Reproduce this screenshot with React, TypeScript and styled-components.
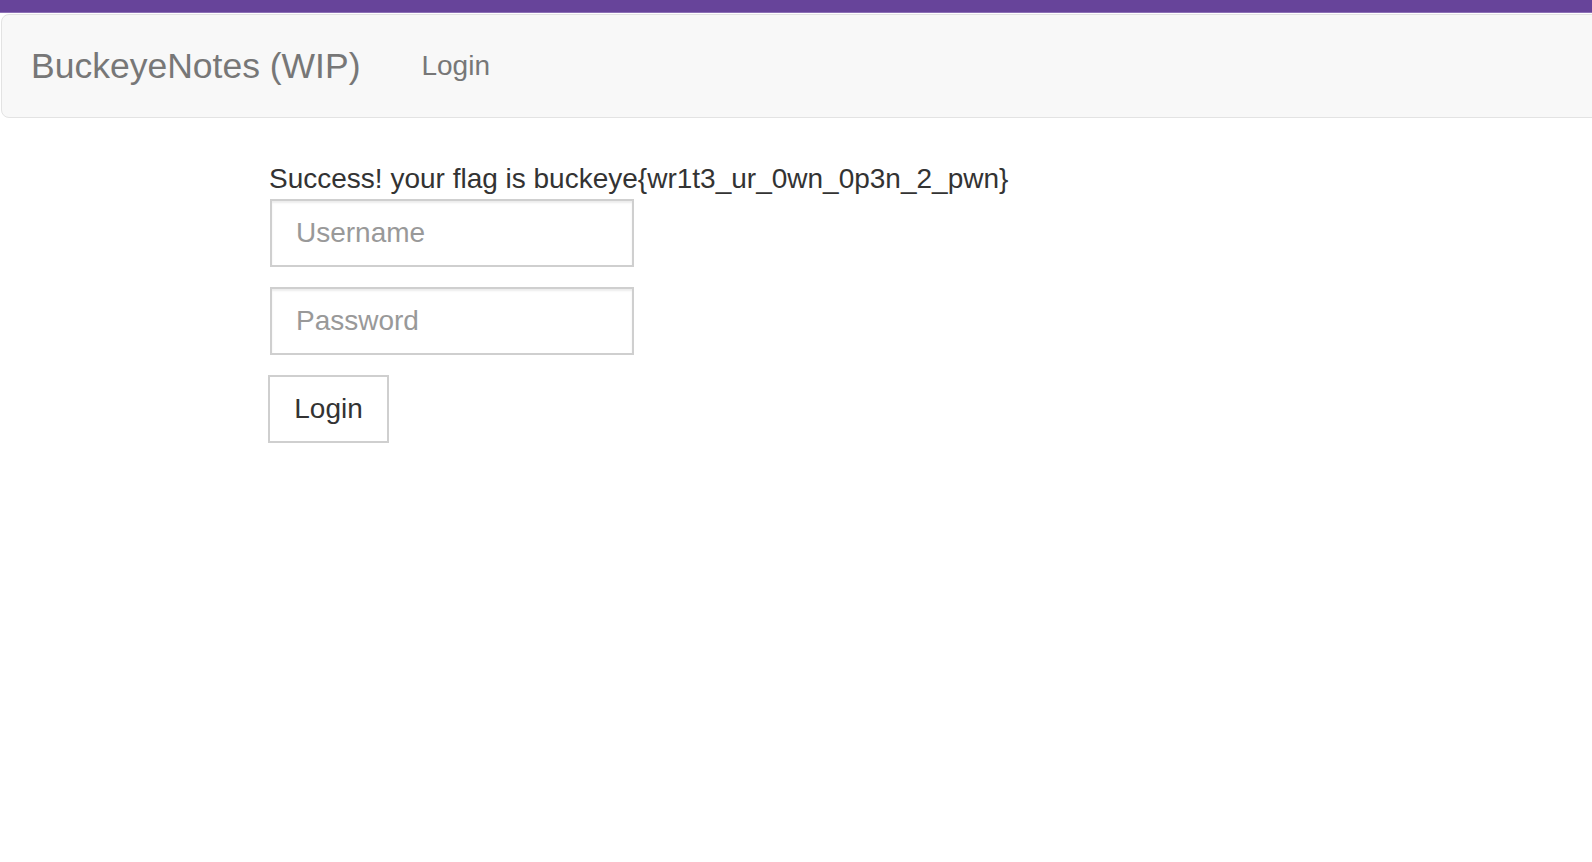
import { createGlobalStyle } from "styled-components";
import styled from "styled-components";

const GlobalStyle = createGlobalStyle`
  html, body {
    margin: 0;
    padding: 0;
    background: #fff;
    overflow-x: hidden;
  }
  body {
    font-family: "Liberation Sans", Arial, Helvetica, sans-serif;
    font-size: 28px;
    line-height: 40px;
    color: #333;
  }
  * {
    box-sizing: border-box;
  }
`;

const AccentBar = styled.div`
  height: 13px;
  background: #67449a;
  border-bottom: 1px solid #8d71b6;
`;

const Navbar = styled.nav`
  display: flex;
  align-items: center;
  height: 104px;
  margin: 1px -20px 0 1px;
  padding-left: 29px;
  background: #f8f8f8;
  border: 1px solid #e3e3e3;
  border-radius: 8px;
`;

const Brand = styled.a`
  font-size: 35.5px;
  color: #777;
  text-decoration: none;
  margin-right: 61px;
  line-height: 40px;
`;

const NavLink = styled.a`
  font-size: 28px;
  color: #777;
  text-decoration: none;
  line-height: 40px;
`;

const Main = styled.main`
  padding: 41px 0 0 268px;
`;

const Message = styled.div`
  padding-left: 1px;
`;

const Form = styled.form`
  display: flex;
  flex-direction: column;
  align-items: flex-start;
`;

const Field = styled.input`
  width: 364px;
  height: 68px;
  margin: 0 0 20px 2px;
  padding: 0 24px;
  font-family: inherit;
  font-size: 28px;
  color: #555;
  background: #fff;
  border: 2px solid #cfcfcf;
  border-radius: 0;
  box-shadow: inset 0 2px 2px rgba(0, 0, 0, 0.075);
  outline: none;

  &::placeholder {
    color: #999;
  }
`;

const Button = styled.button`
  width: 121px;
  height: 68px;
  padding: 0 24px;
  font-family: inherit;
  font-size: 28px;
  color: #333;
  background: #fff;
  border: 2px solid #cfcfcf;
  border-radius: 0;
  cursor: pointer;
`;

export default function App() {
  return (
    <>
      <GlobalStyle />
      <AccentBar />
      <Navbar>
        <Brand href="#">BuckeyeNotes (WIP)</Brand>
        <NavLink href="#">Login</NavLink>
      </Navbar>
      <Main>
        <Message>Success! your flag is buckeye{"{"}wr1t3_ur_0wn_0p3n_2_pwn{"}"}</Message>
        <Form onSubmit={(e) => e.preventDefault()}>
          <Field type="text" placeholder="Username" />
          <Field type="password" placeholder="Password" />
          <Button type="submit">Login</Button>
        </Form>
      </Main>
    </>
  );
}
